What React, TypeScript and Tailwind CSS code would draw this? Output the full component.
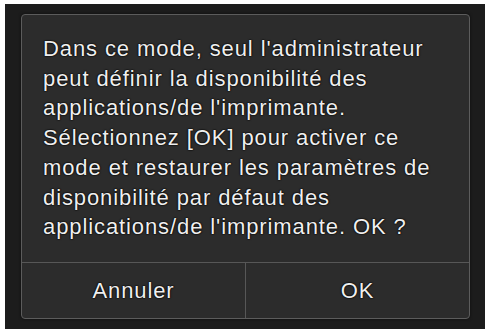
export default function App() {
  const ts = "[text-shadow:0_0_2px_#000,0_0_1px_#000,0_0_1px_#000]";
  const lines = [
    "Dans ce mode, seul l'administrateur",
    "peut définir la disponibilité des",
    "applications/de l'imprimante.",
    "Sélectionnez [OK] pour activer ce",
    "mode et restaurer les paramètres de",
    "disponibilité par défaut des",
    "applications/de l'imprimante. OK ?",
  ];
  return (
    <div className="w-[485px] h-[329px] bg-white pt-[4px] pl-[5px] overflow-hidden" style={{ fontFamily: '"Liberation Sans", Arial, sans-serif' }}>
      <div className="h-[325px] bg-[#1c1c1c] pt-[10px] pl-[16px]">
        <div className="w-[449px] h-[305px] border border-[#5c5c5c] rounded-[4px] bg-[#2c2c2c] flex flex-col shadow-[0_0_3px_#0c0c0c]">
          <div className={`h-[247px] pl-[21px] pt-[19px] text-[22px] tracking-[0.9px] leading-[29.7px] text-[#efefef] whitespace-nowrap ${ts}`}>
            {lines.map((l, i) => (
              <div key={i}>{l}</div>
            ))}
          </div>
          <div className="flex-1 flex border-t border-[#575757]">
            <div className={`flex-1 flex items-center justify-center text-[22px] tracking-[0.9px] text-[#efefef] border-r border-[#575757] ${ts}`}>Annuler</div>
            <div className={`flex-1 flex items-center justify-center text-[22px] tracking-[0.9px] text-[#efefef] ${ts}`}>OK</div>
          </div>
        </div>
      </div>
    </div>
  );
}
